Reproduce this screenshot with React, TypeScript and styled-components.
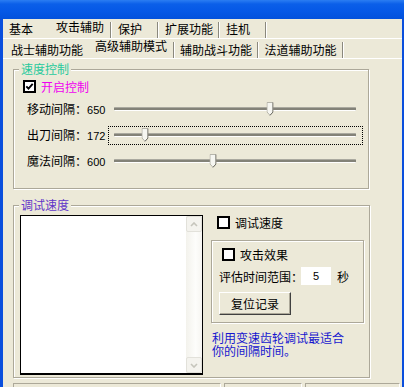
import React from "react";
import styled, { createGlobalStyle } from "styled-components";

const Global = createGlobalStyle`
  html, body { margin: 0; padding: 0; background: #ece9d8; }
  body {
    font-family: "Liberation Sans", "Noto Sans CJK SC", sans-serif;
    font-size: 12px;
    color: #000;
  }
  * { box-sizing: border-box; }
`;

const Window = styled.div`
  width: 404px;
  height: 387px;
  overflow: hidden;
  display: flex;
  flex-direction: column;
  background: #ece9d8;
`;

const TitleBar = styled.div`
  height: 19px;
  flex: none;
  background: linear-gradient(to bottom, #2b7df2 0, #0b5fe9 4px, #0558e6 60%, #0251dc 100%);
`;

const Frame = styled.div`
  flex: 1;
  display: flex;
  flex-direction: column;
  border-left: 3px solid #0a4fdd;
  border-right: 2px solid #0a4fdd;
`;

const TabRow = styled.div<{ $pad: number }>`
  display: flex;
  height: 20px;
  flex: none;
  padding-left: ${(p) => p.$pad}px;
  border-bottom: 1px solid #fff;
`;

const Tab = styled.div<{ $w: number; $sel?: boolean; $center?: boolean; $row: 1 | 2 }>`
  width: ${(p) => p.$w}px;
  flex: none;
  display: flex;
  align-items: center;
  justify-content: ${(p) => (p.$center ? "center" : "flex-start")};
  padding-left: ${(p) => (p.$center ? 0 : 6)}px;
  padding-top: ${(p) => (p.$sel ? 0 : p.$row === 2 ? 2 : 0)}px;
  padding-bottom: ${(p) => (p.$sel ? (p.$row === 2 ? 5 : 3) : 0)}px;
  font-family: "Noto Sans CJK SC", sans-serif;
  font-size: 12px;
  line-height: 14px;
  white-space: nowrap;
`;

const TabSep = styled.div`
  width: 2px;
  flex: none;
  margin-top: 3px;
  border-left: 1px solid #8a887d;
  border-right: 1px solid #fff;
`;

const Page = styled.div`
  flex: 1;
  display: flex;
  flex-direction: column;
  padding-left: 10px;
`;

const GroupBox = styled.div<{ $w: number; $h: number; $top: number }>`
  width: ${(p) => p.$w}px;
  height: ${(p) => p.$h}px;
  margin-top: ${(p) => p.$top}px;
  flex: none;
  border: 1px solid #aca899;
  box-shadow: 1px 1px 0 #fff, inset 1px 1px 0 #fff;
  display: flex;
  flex-direction: column;
`;

const Legend = styled.div<{ $color: string }>`
  align-self: flex-start;
  margin: -8px 0 0 5px;
  padding: 0 2px;
  background: #ece9d8;
  color: ${(p) => p.$color};
  font-family: "Noto Sans CJK SC", sans-serif;
  font-size: 12px;
  line-height: 14px;
`;

const CheckRow = styled.label<{ $top: number; $left: number }>`
  display: flex;
  align-items: center;
  gap: 5px;
  margin-top: ${(p) => p.$top}px;
  padding-left: ${(p) => p.$left}px;
  height: 13px;
  font-family: "Noto Sans CJK SC", sans-serif;
  font-size: 12px;
  line-height: 13px;
`;

const Box = styled.span`
  width: 13px;
  height: 13px;
  flex: none;
  border: 2px solid #000;
  background: #fff;
  display: inline-flex;
  align-items: center;
  justify-content: center;
`;

const CheckText = styled.span<{ $color?: string }>`
  color: ${(p) => p.$color || "#000"};
`;

const Sliders = styled.div`
  display: flex;
  flex-direction: column;
  gap: 7px;
  margin-top: 7px;
`;

const SliderRow = styled.div`
  display: grid;
  grid-template-columns: 94px 255px;
  align-items: center;
  height: 19px;
`;

const SliderLabel = styled.div`
  padding-left: 13px;
  font-family: "Noto Sans CJK SC", sans-serif;
  font-size: 12px;
  line-height: 14px;
  white-space: nowrap;
`;

const Num = styled.span`
  font-family: "Liberation Sans", sans-serif;
  font-size: 11px;
`;

const SliderBox = styled.div<{ $focus?: boolean }>`
  width: 255px;
  height: 19px;
  border: 1px dotted ${(p) => (p.$focus ? "#000" : "transparent")};
  padding: 6px 0 0 5px;
`;

const Track = styled.div`
  position: relative;
  width: 242px;
  height: 4px;
  border-top: 1px solid #aaa99f;
  border-bottom: 1px solid #fff;
  background: #838278;
  border-radius: 1px;
`;

const Thumb = styled.div`
  position: absolute;
  top: -6px;
  width: 7px;
  height: 14px;
  transform: translateX(-50%);
  display: flex;
`;

const GroupBody = styled.div`
  display: flex;
  margin-top: 3px;
  padding-left: 6px;
`;

const ListBox = styled.div`
  width: 183px;
  height: 160px;
  flex: none;
  border: 1px solid #000;
  border-bottom-width: 2px;
  background: #fff;
  display: flex;
  justify-content: flex-end;
`;

const ScrollBar = styled.div`
  width: 16px;
  display: flex;
  flex-direction: column;
  background: linear-gradient(to right, #f3f2ec, #fdfdfb 60%, #f6f5f1);
`;

const ScrollBtn = styled.div`
  width: 16px;
  height: 16px;
  flex: none;
  border: 1px solid #e2e1da;
  border-radius: 2px;
  background: #f4f3ee;
  display: flex;
  align-items: center;
  justify-content: center;
`;

const ScrollTrack = styled.div`
  flex: 1;
`;

const RightCol = styled.div`
  width: 153px;
  margin-left: 8px;
  display: flex;
  flex-direction: column;
`;

const InnerBox = styled.div`
  margin-top: 11px;
  height: 83px;
  border: 1px solid #aca899;
  box-shadow: 1px 1px 0 #fff, inset 1px 1px 0 #fff;
  display: flex;
  flex-direction: column;
`;

const RangeRow = styled.div`
  display: flex;
  align-items: center;
  margin-top: 6px;
  padding-left: 7px;
  height: 18px;
  font-family: "Noto Sans CJK SC", sans-serif;
  font-size: 12px;
`;

const NumInput = styled.div`
  width: 30px;
  height: 18px;
  margin-left: -2px;
  background: #fff;
  display: flex;
  align-items: center;
  justify-content: center;
  font-family: "Liberation Sans", sans-serif;
  font-size: 11px;
`;

const Unit = styled.span`
  margin-left: 6px;
`;

const Button = styled.div`
  width: 72px;
  height: 23px;
  margin: 7px 0 0 7px;
  background: #ece9d8;
  border-top: 1px solid #fff;
  border-left: 1px solid #fff;
  border-right: 1px solid #404040;
  border-bottom: 1px solid #404040;
  box-shadow: inset -1px -1px 0 #aca899;
  display: flex;
  align-items: center;
  justify-content: center;
  font-family: "Noto Sans CJK SC", sans-serif;
  font-size: 12px;
`;

const Hint = styled.div`
  margin-top: 8px;
  padding-left: 1px;
  display: flex;
  flex-direction: column;
  color: #1616cf;
  font-family: "Noto Sans CJK SC", sans-serif;
  font-size: 12px;
`;

const HintLine = styled.span`
  display: block;
  height: 13px;
  line-height: 13px;
`;

const StatusBar = styled.div`
  display: flex;
  gap: 3px;
  height: 20px;
  flex: none;
  margin-top: 5px;
`;

const Panel = styled.div<{ $w: number }>`
  width: ${(p) => p.$w}px;
  border-top: 1px solid #aca899;
  border-left: 1px solid #aca899;
  border-right: 1px solid #fff;
`;

const Check = () => (
  <svg width="9" height="9" viewBox="0 0 9 9">
    <polyline points="1.3,4.3 3.5,6.6 7.7,1.8" fill="none" stroke="#000" strokeWidth="1.9" />
  </svg>
);

const ThumbIcon = () => (
  <svg width="7" height="14" viewBox="0 0 7 14">
    <path d="M0.5 0.5H6.5V10L3.5 13.3L0.5 10Z" fill="#f6f6f1" stroke="#b6b5ab" />
    <path d="M6.5 0.5V10L3.5 13.3" fill="none" stroke="#6f6e66" />
  </svg>
);

const Chevron = ({ up }: { up?: boolean }) => (
  <svg width="8" height="5" viewBox="0 0 8 5">
    <polyline
      points={up ? "1,4 4,1 7,4" : "1,1 4,4 7,1"}
      fill="none"
      stroke="#c6c5bc"
      strokeWidth="1.6"
    />
  </svg>
);

const row1 = [
  { t: "基本", w: 47, sep: false },
  { t: "攻击辅助", w: 60, sel: true, sep: true },
  { t: "保护", w: 45, sep: true },
  { t: "扩展功能", w: 59, sep: true },
  { t: "挂机", w: 45, sep: true },
];

const row2 = [
  { t: "战士辅助功能", w: 84, sep: false },
  { t: "高级辅助模式", w: 84, sel: true, sep: true },
  { t: "辅助战斗功能", w: 82, sep: true },
  { t: "法道辅助功能", w: 83, sep: true },
];

const sliders = [
  { name: "移动间隔", value: 650, pos: 0.645, focus: false },
  { name: "出刀间隔", value: 172, pos: 0.128, focus: true },
  { name: "魔法间隔", value: 600, pos: 0.409, focus: false },
];

export default function App() {
  return (
    <>
      <Global />
      <Window>
        <TitleBar />
        <Frame>
          <TabRow $pad={0}>
            {row1.map((t) => (
              <React.Fragment key={t.t}>
                <Tab $w={t.w} $sel={t.sel} $row={1}>
                  {t.t}
                </Tab>
                {t.sep && <TabSep />}
              </React.Fragment>
            ))}
          </TabRow>
          <TabRow $pad={2}>
            {row2.map((t) => (
              <React.Fragment key={t.t}>
                <Tab $w={t.w} $sel={t.sel} $row={2} $center>
                  {t.t}
                </Tab>
                {t.sep && <TabSep />}
              </React.Fragment>
            ))}
          </TabRow>
          <Page>
            <GroupBox $w={356} $h={120} $top={10}>
              <Legend $color="#27c99c">速度控制</Legend>
              <CheckRow $top={4} $left={9}>
                <Box>
                  <Check />
                </Box>
                <CheckText $color="#f000f0">开启控制</CheckText>
              </CheckRow>
              <Sliders>
                {sliders.map((s) => (
                  <SliderRow key={s.name}>
                    <SliderLabel>
                      {s.name}：<Num>{s.value}</Num>
                    </SliderLabel>
                    <SliderBox $focus={s.focus}>
                      <Track>
                        <Thumb style={{ left: `${s.pos * 100}%` }}>
                          <ThumbIcon />
                        </Thumb>
                      </Track>
                    </SliderBox>
                  </SliderRow>
                ))}
              </Sliders>
            </GroupBox>

            <GroupBox $w={357} $h={173} $top={16}>
              <Legend $color="#6236c8">调试速度</Legend>
              <GroupBody>
                <ListBox>
                  <ScrollBar>
                    <ScrollBtn>
                      <Chevron up />
                    </ScrollBtn>
                    <ScrollTrack />
                    <ScrollBtn>
                      <Chevron />
                    </ScrollBtn>
                  </ScrollBar>
                </ListBox>
                <RightCol>
                  <CheckRow $top={1} $left={6}>
                    <Box />
                    <CheckText>调试速度</CheckText>
                  </CheckRow>
                  <InnerBox>
                    <CheckRow $top={7} $left={10}>
                      <Box />
                      <CheckText>攻击效果</CheckText>
                    </CheckRow>
                    <RangeRow>
                      <span>评估时间范围：</span>
                      <NumInput>5</NumInput>
                      <Unit>秒</Unit>
                    </RangeRow>
                    <Button>复位记录</Button>
                  </InnerBox>
                  <Hint>
                    <HintLine>利用变速齿轮调试最适合</HintLine>
                    <HintLine>你的间隔时间。</HintLine>
                  </Hint>
                </RightCol>
              </GroupBody>
            </GroupBox>

            <StatusBar>
              <Panel $w={208} />
              <Panel $w={78} />
              <Panel $w={95} />
            </StatusBar>
          </Page>
        </Frame>
      </Window>
    </>
  );
}
